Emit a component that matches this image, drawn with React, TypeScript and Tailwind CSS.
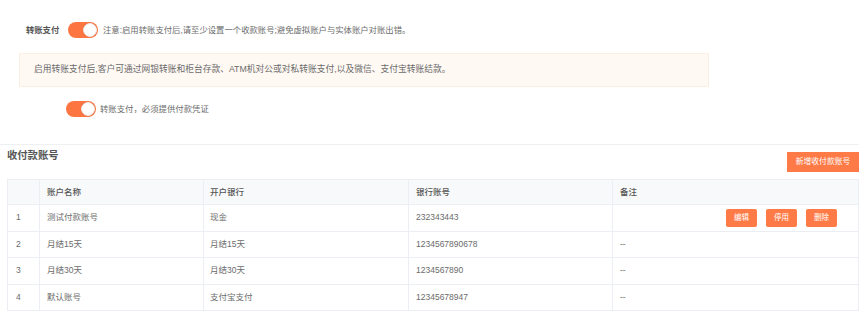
const rows = [
  { no: 1, name: "测试付款账号", bank: "现金", account: "232343443", remark: "", actions: true },
  { no: 2, name: "月结15天", bank: "月结15天", account: "1234567890678", remark: "--", actions: false },
  { no: 3, name: "月结30天", bank: "月结30天", account: "1234567890", remark: "--", actions: false },
  { no: 4, name: "默认账号", bank: "支付宝支付", account: "12345678947", remark: "--", actions: false },
];

function Toggle() {
  return (
    <div className="flex h-[16px] w-[30px] shrink-0 items-center justify-end rounded-full bg-[#fd7642] pr-[1px]">
      <div className="h-[14px] w-[14px] rounded-full border border-[#f1e6e0] bg-white shadow-[0_0_1px_rgba(0,0,0,0.2)]" />
    </div>
  );
}

export default function App() {
  return (
    <div className="h-[320px] w-[859px] overflow-hidden bg-white font-['Liberation_Sans','Noto_Sans_CJK_SC',sans-serif] text-[#6b6b6b]">
      <div className="pt-[22px]">
        <div className="flex items-center pl-[26px]">
          <span className="w-[42px] text-[8.3px] font-semibold text-[#555]">转账支付</span>
          <Toggle />
          <span className="ml-[5px] text-[8.35px]">
            注意:启用转账支付后,请至少设置一个收款账号;避免虚拟账户与实体账户对账出错。
          </span>
        </div>

        <div className="ml-[19px] mt-[15px] flex h-[34px] w-[690px] items-center border border-[#fbeee2] bg-[#fff9f4] pl-[14px] text-[8.75px]">
          启用转账支付后,客户可通过网银转账和柜台存款、ATM机对公或对私转账支付,以及微信、支付宝转账结款。
        </div>

        <div className="mt-[14px] flex items-center pl-[66px]">
          <Toggle />
          <span className="ml-[4px] text-[8.4px]">转账支付，必须提供付款凭证</span>
        </div>
      </div>

      <div className="mt-[27px] border-t border-[#eef0f2] px-[7px]">
        <div className="flex items-start justify-between">
          <h2 className="mt-[4px] text-[10.3px] font-bold leading-[14px] text-[#555]">收付款账号</h2>
          <button className="-mr-[7px] mt-[7px] h-[20px] w-[72px] bg-[#fe7a46] text-[7.8px] text-white">
            新增收付款账号
          </button>
        </div>

        <table className="mt-[7px] w-[851px] table-fixed border-collapse border border-[#ebeef2] text-[8.5px]">
          <colgroup>
            <col className="w-[32px]" />
            <col className="w-[164px]" />
            <col className="w-[205px]" />
            <col className="w-[204px]" />
            <col className="w-[246px]" />
          </colgroup>
          <thead>
            <tr className="h-[25px] bg-[#f8f9fa] text-left text-[#555]">
              <th className="border border-[#ebeef2] pl-[8px] font-medium"></th>
              <th className="border border-[#ebeef2] pl-[7px] font-medium">账户名称</th>
              <th className="border border-[#ebeef2] pl-[6px] font-medium">开户银行</th>
              <th className="border border-[#ebeef2] pl-[7px] font-medium">银行账号</th>
              <th className="border border-[#ebeef2] pl-[7px] font-medium">备注</th>
            </tr>
          </thead>
          <tbody>
            {rows.map((r) => (
              <tr key={r.no} className="h-[26.5px]">
                <td className="border border-[#ebeef2] pl-[8px]">{r.no}</td>
                <td className="border border-[#ebeef2] pl-[7px]">{r.name}</td>
                <td className="border border-[#ebeef2] pl-[6px]">{r.bank}</td>
                <td className="border border-[#ebeef2] pl-[7px]">{r.account}</td>
                <td className="border border-[#ebeef2] pl-[7px]">
                  {r.actions ? (
                    <div className="flex justify-end gap-[9px] pr-[21px]">
                      <button className="h-[18px] w-[31px] rounded-[2px] bg-[#fe7a46] text-[7.5px] text-white">编辑</button>
                      <button className="h-[18px] w-[31px] rounded-[2px] bg-[#fe7a46] text-[7.5px] text-white">停用</button>
                      <button className="h-[18px] w-[31px] rounded-[2px] bg-[#fe7a46] text-[7.5px] text-white">删除</button>
                    </div>
                  ) : (
                    r.remark
                  )}
                </td>
              </tr>
            ))}
          </tbody>
        </table>
      </div>
    </div>
  );
}
